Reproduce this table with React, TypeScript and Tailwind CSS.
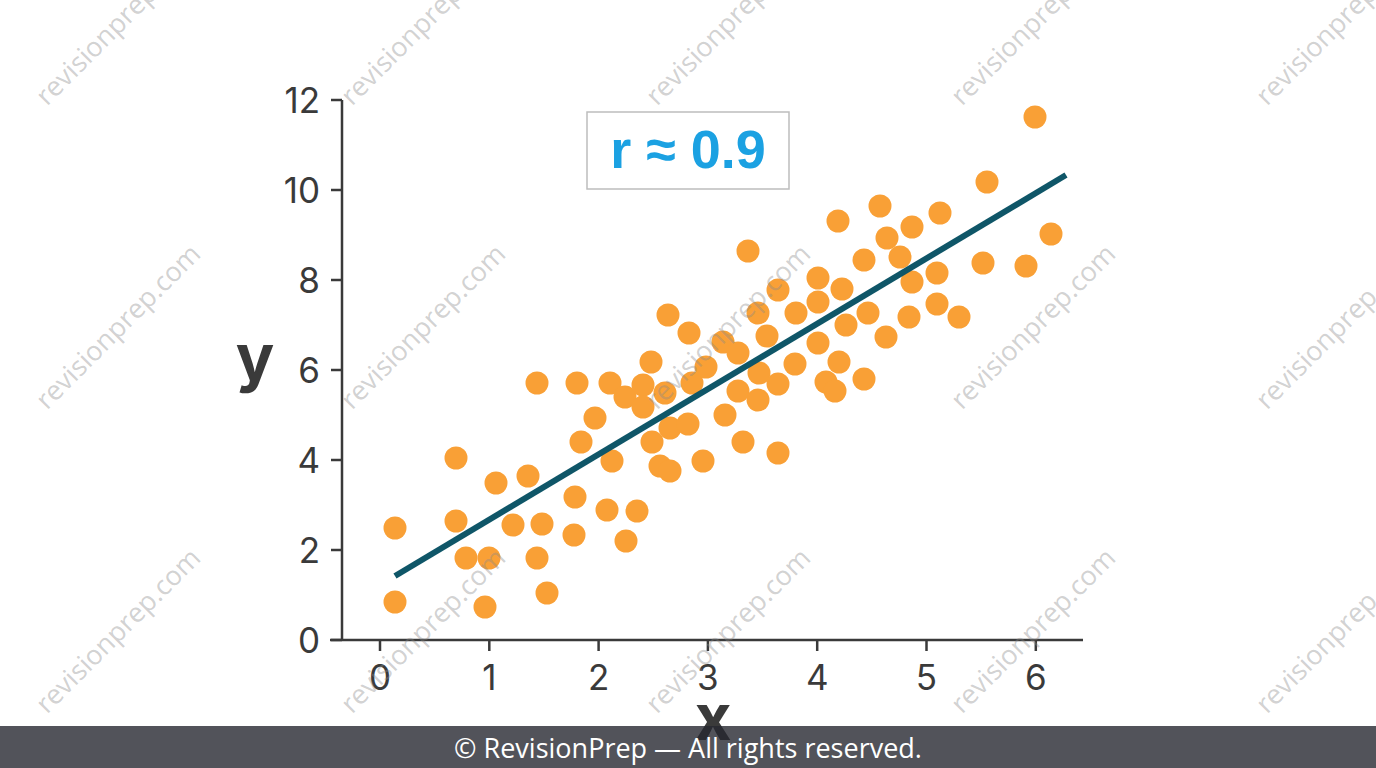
const dots: [number, number][] = [
  [395, 528], [395, 602], [456, 458], [456, 521], [466, 558], [485, 607],
  [489, 558], [496, 483], [513, 525], [528, 476], [537, 383], [537, 558],
  [542, 524], [547, 593], [574, 535], [575, 497], [577, 383], [581, 442],
  [595, 418], [607, 510], [610, 383], [612, 461], [625, 397], [626, 541],
  [637, 511], [643, 385], [643, 407], [651, 362], [652, 442], [660, 466],
  [665, 393], [668, 315], [670, 428], [670, 471], [689, 333], [688, 424],
  [692, 383], [703, 461], [706, 367], [723, 342], [725, 415], [738, 353],
  [738, 391], [743, 442], [748, 251], [758, 313], [758, 400], [759, 373],
  [767, 336], [778, 290], [778, 384], [778, 453], [795, 364], [796, 313],
  [818, 278], [818, 302], [818, 343], [826, 382], [835, 391], [838, 221],
  [839, 362], [842, 289], [846, 325], [864, 379], [864, 260], [868, 313],
  [880, 206], [887, 238], [886, 337], [900, 257], [912, 227], [912, 282],
  [909, 317], [937, 273], [937, 304], [940, 213], [959, 317], [983, 263],
  [987, 182], [1026, 266], [1035, 117], [1051, 234],
];

const yTicks = [0, 2, 4, 6, 8, 10, 12];
const xTicks = [0, 1, 2, 3, 4, 5, 6];
const yPos = (v: number) => 640 - v * 45;
const xPos = (v: number) => 380 + v * 109.3;

const axisFont = "Inter, 'Open Sans', sans-serif";

const Chart = () => (
  <svg width="1376" height="768" viewBox="0 0 1376 768" className="block">
    {/* axes */}
    <line x1="342" y1="100" x2="342" y2="641" stroke="#3a3a3a" strokeWidth="2.5" />
    <line x1="330" y1="640" x2="1083" y2="640" stroke="#3a3a3a" strokeWidth="2.5" />
    {yTicks.map((t) => (
      <g key={`y${t}`}>
        <line x1="331" y1={yPos(t)} x2="342" y2={yPos(t)} stroke="#3a3a3a" strokeWidth="2.5" />
        <text
          x="320"
          y={yPos(t) + 13}
          textAnchor="end"
          fontSize="35"
          fill="#3a3a3a"
          fontFamily={axisFont}
        >
          {t}
        </text>
      </g>
    ))}
    {xTicks.map((t) => (
      <g key={`x${t}`}>
        <line x1={xPos(t)} y1="640" x2={xPos(t)} y2="651" stroke="#3a3a3a" strokeWidth="2.5" />
        <text
          x={xPos(t)}
          y="690"
          textAnchor="middle"
          fontSize="35"
          fill="#3a3a3a"
          fontFamily={axisFont}
        >
          {t}
        </text>
      </g>
    ))}

    {/* axis titles */}
    <text x="255" y="380" textAnchor="middle" fontSize="64" fontWeight="700" fill="#3a3a3a" fontFamily={axisFont}>
      y
    </text>
    <text x="713" y="740" textAnchor="middle" fontSize="64" fontWeight="700" fill="#3a3a3a" fontFamily={axisFont}>
      x
    </text>

    {/* points */}
    {dots.map(([cx, cy], i) => (
      <circle key={i} cx={cx} cy={cy} r="11.5" fill="#f9a036" />
    ))}

    {/* regression line */}
    <line x1="395" y1="576" x2="1066" y2="175" stroke="#0f5668" strokeWidth="6" />

    {/* correlation label */}
    <rect x="587" y="112" width="202" height="77" fill="#ffffff" stroke="#bdbdbd" strokeWidth="1.5" />
    <text
      x="688"
      y="168"
      textAnchor="middle"
      fontSize="54"
      fontWeight="700"
      fill="#1ba1e2"
      fontFamily="'Liberation Sans', Arial, sans-serif"
    >
      r ≈ 0.9
    </text>
  </svg>
);

const Watermarks = () => (
  <div className="pointer-events-none absolute left-[-35px] top-[-130px] grid grid-cols-[repeat(5,305px)] grid-rows-[repeat(3,304px)]">
    {Array.from({ length: 15 }).map((_, i) => (
      <div key={i} className="flex items-center justify-center">
        <span className="-rotate-45 whitespace-nowrap font-['Open_Sans',sans-serif] text-[27px] text-[#8a8a8a]/40">
          revisionprep.com
        </span>
      </div>
    ))}
  </div>
);

export default function App() {
  return (
    <div className="relative h-[768px] w-full overflow-hidden bg-white">
      <Chart />
      <Watermarks />
      <footer className="absolute inset-x-0 bottom-0 flex h-[42px] items-center justify-center bg-[rgba(39,40,49,0.8)]">
        <p className="font-['Open_Sans',sans-serif] text-[27px] leading-none text-white">
          © RevisionPrep — All rights reserved.
        </p>
      </footer>
    </div>
  );
}
